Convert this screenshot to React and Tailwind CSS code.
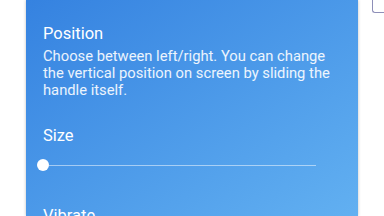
export default function App() {
  return (
    <div className="relative flex h-[216px] w-[384px] overflow-hidden bg-white" style={{ fontFamily: "Roboto, 'Noto Sans', sans-serif" }}>
      <div className="absolute right-0 top-[-4px] h-[17px] w-[12px] rounded-bl-[3px] border border-r-0 border-[#8e8fb8] bg-white" />
      <div className="ml-[26px] flex h-full w-[332px] flex-col bg-gradient-to-br from-[#3582e0] to-[#62b0f1] pl-[17px] pr-[20px] pt-[24px] text-white shadow-[0_0_3px_rgba(0,0,0,0.25)]">
        <div className="text-[16.5px] leading-[20px]">Position</div>
        <p className="mt-[4px] text-[14.75px] leading-[17px] text-white/90">
          Choose between left/right. You can change the vertical position on screen by sliding the handle itself.
        </p>
        <div className="mt-[27px] text-[16.5px] leading-[20px]">Size</div>
        <div className="ml-[-6px] mt-[13px] flex h-[12px] w-[279px] items-center">
          <div className="h-[12px] w-[12px] shrink-0 rounded-full bg-white" />
          <div className="h-px flex-1 bg-white/50" />
        </div>
        <div className="mt-[35px] text-[16.5px] leading-[20px]">Vibrate</div>
      </div>
    </div>
  );
}
